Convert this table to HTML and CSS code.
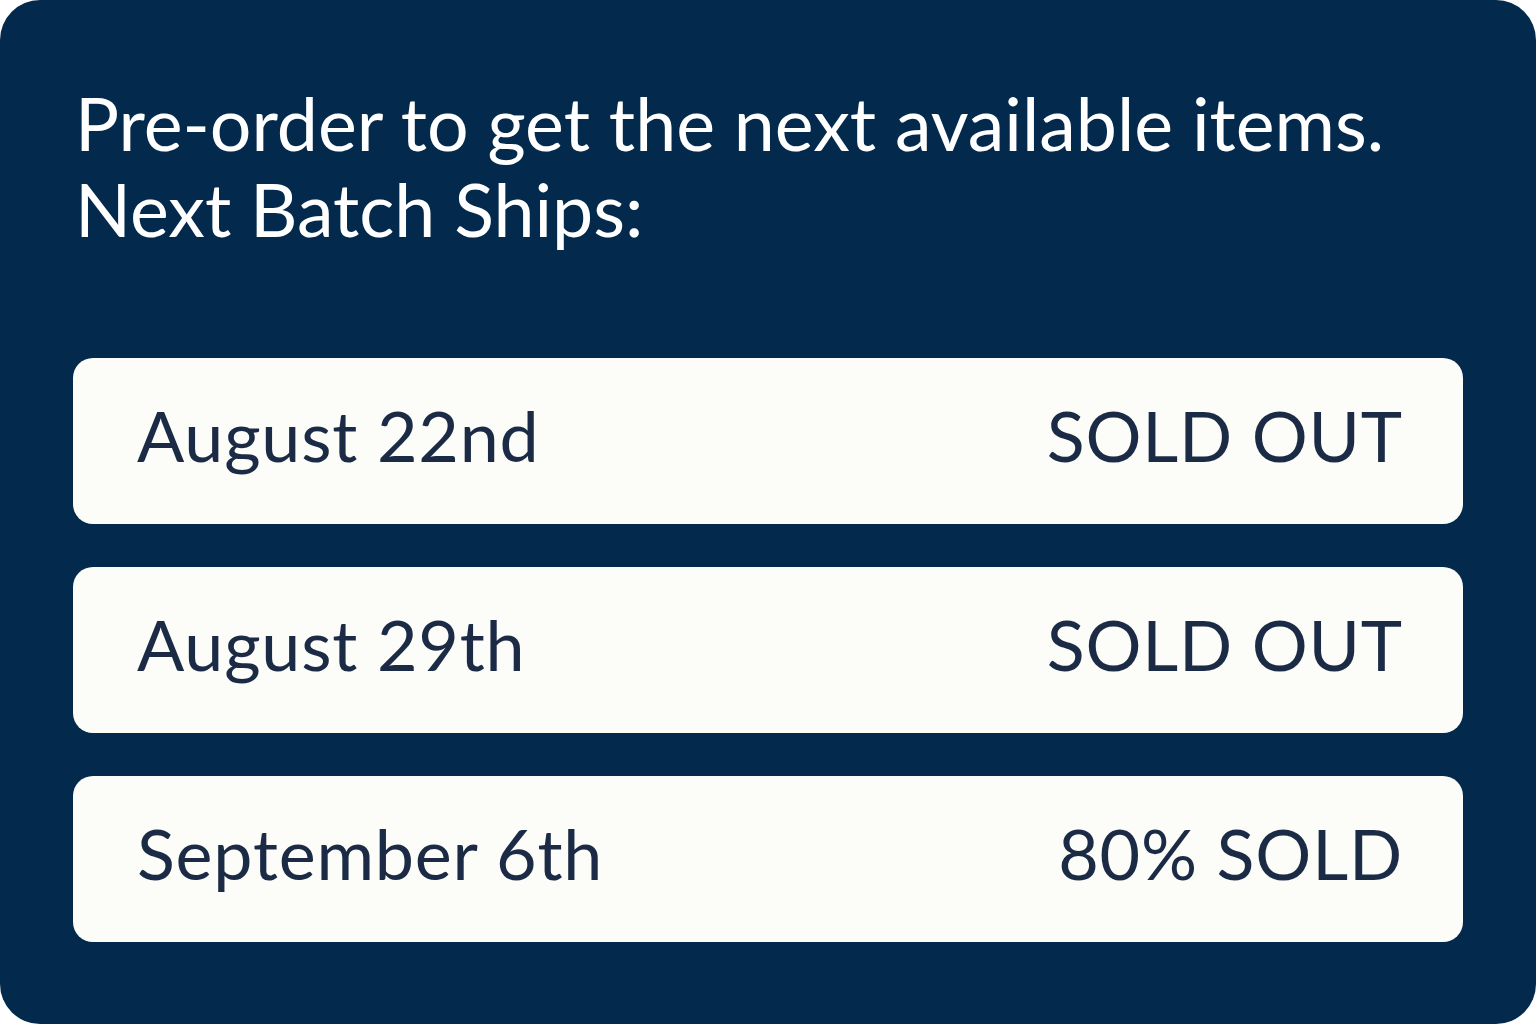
FILE: index.html
```html
<!DOCTYPE html>
<html lang="en">
<head>
<meta charset="utf-8">
<title>Pre-order</title>
<link rel="stylesheet" href="styles.css">
</head>
<body>
<main class="card">
  <h1 class="title">Pre-order to get the next available items.<br>Next Batch Ships:</h1>
  <ul class="batches">
    <li class="batch"><span class="date">August 22nd</span><span class="status">SOLD OUT</span></li>
    <li class="batch"><span class="date">August 29th</span><span class="status">SOLD OUT</span></li>
    <li class="batch"><span class="date">September 6th</span><span class="status">80% SOLD</span></li>
  </ul>
</main>
</body>
</html>
```
FILE: styles.css
```css
html, body {
  margin: 0;
  padding: 0;
  background: #ffffff;
}
body {
  width: 1536px;
  height: 1024px;
  font-family: "Lato", "Inter", sans-serif;
}
.card {
  box-sizing: border-box;
  width: 1536px;
  height: 1024px;
  background: #032a4c;
  border-radius: 40px;
  padding: 80px 73px 0 75px;
  display: flex;
  flex-direction: column;
}
.title {
  margin: 0;
  color: #ffffff;
  font-weight: 400;
  font-size: 73.5px;
  line-height: 86px;
  letter-spacing: 0;
}
.batches {
  list-style: none;
  margin: 106px 0 0 -2px;
  padding: 0;
  display: flex;
  flex-direction: column;
  gap: 43px;
}
.batch {
  box-sizing: border-box;
  height: 166px;
  background: #fcfcf8;
  border-radius: 20px;
  padding: 0 60px 12px 64px;
  display: flex;
  align-items: center;
  justify-content: space-between;
  color: #1b2a45;
  font-size: 70px;
  letter-spacing: 0.8px;
}
```
